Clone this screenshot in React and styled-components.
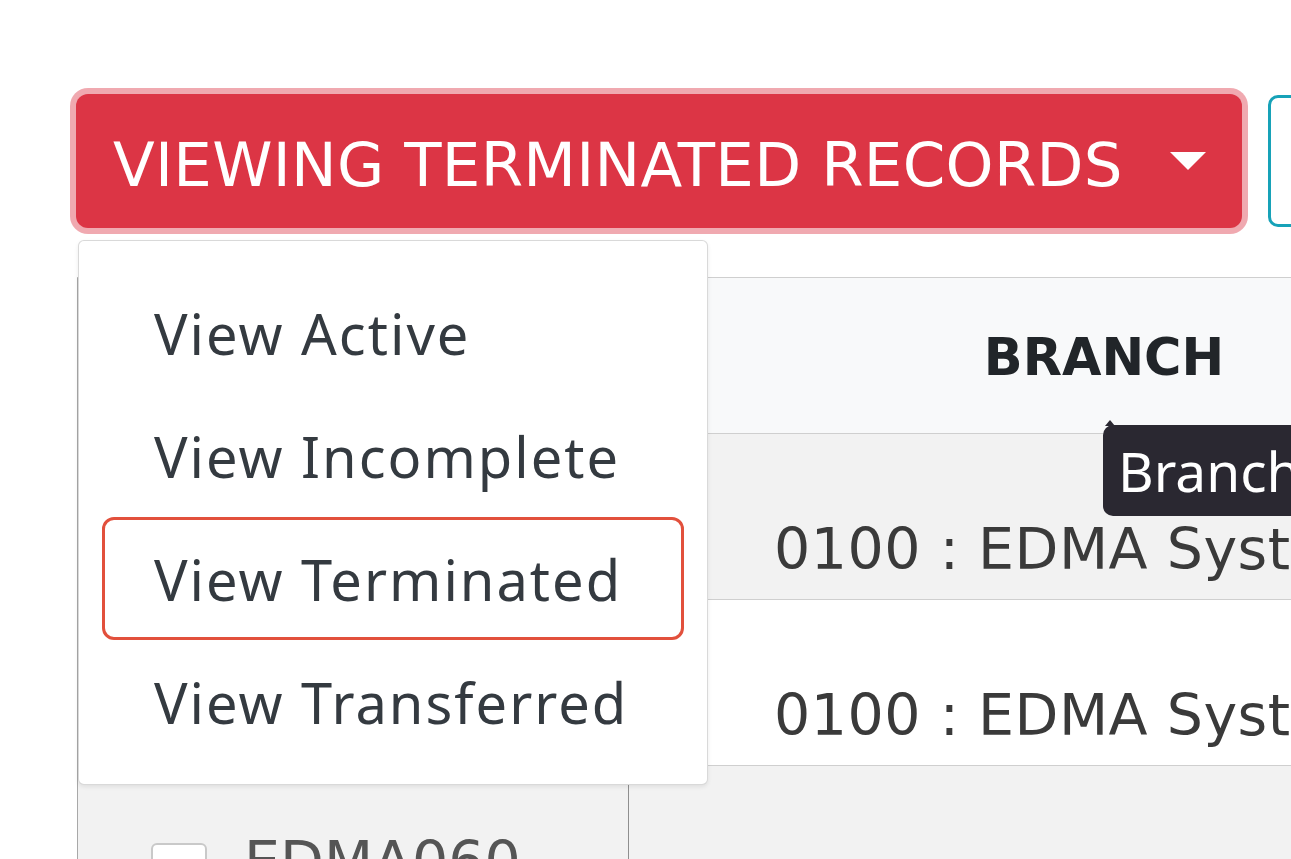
import React from "react";
import styled, { createGlobalStyle } from "styled-components";

const GlobalStyle = createGlobalStyle`
  html, body {
    margin: 0;
    padding: 0;
    background: #fff;
    overflow: hidden;
  }
`;

const menuItems = ["View Active", "View Incomplete", "View Terminated", "View Transferred"];

const App = () => {
  return (
    <Page>
      <GlobalStyle />
      <Toolbar>
        <DropdownWrap>
          <ToggleButton>
            VIEWING TERMINATED RECORDS
            <Caret />
          </ToggleButton>
          <Menu>
            {menuItems.map(item => (
              <MenuItem key={item} $marked={item === "View Terminated"}>
                {item}
              </MenuItem>
            ))}
          </Menu>
        </DropdownWrap>
        <OutlineButton />
      </Toolbar>

      <Table>
        <HeadRow>
          <Cell />
          <HeadCell>BRANCH</HeadCell>
        </HeadRow>
        <Row $striped>
          <Cell />
          <BranchCell>0100 : EDMA Systems</BranchCell>
        </Row>
        <Row>
          <Cell />
          <BranchCell>0100 : EDMA Systems</BranchCell>
        </Row>
        <Row $striped $tall>
          <IdCell>
            <Checkbox />
            EDMA060
          </IdCell>
          <Cell />
        </Row>
        <Tooltip>Branch</Tooltip>
      </Table>
    </Page>
  );
};

export default App;

const Page = styled.div`
  padding: 94px 0 0 76px;
  width: max-content;
  font-family: "DejaVu Sans", sans-serif;
`;

const Toolbar = styled.div`
  display: flex;
  align-items: center;
  gap: 26px;
`;

const DropdownWrap = styled.div`
  position: relative;
`;

const ToggleButton = styled.button`
  display: flex;
  align-items: center;
  width: 1166px;
  height: 134px;
  padding: 6px 36px 0 37px;
  border: none;
  border-radius: 12px;
  background: #dc3545;
  box-shadow: 0 0 0 6px rgba(225, 83, 97, 0.5);
  color: #fff;
  font-family: "DejaVu Sans", sans-serif;
  font-size: 61px;
  letter-spacing: 0.3px;
  white-space: nowrap;
`;

const Caret = styled.span`
  margin: -6px 0 0 auto;
  width: 0;
  height: 0;
  border-top: 18px solid #fff;
  border-left: 18px solid transparent;
  border-right: 18px solid transparent;
`;

const OutlineButton = styled.button`
  width: 200px;
  height: 132px;
  border: 3px solid #17a2b8;
  border-radius: 10px;
  background: #fff;
`;

const Menu = styled.div`
  position: absolute;
  z-index: 5;
  top: calc(100% + 12px);
  left: 2px;
  width: 630px;
  box-sizing: border-box;
  padding: 30px 0 21px;
  background: #fff;
  border: 1px solid rgba(0, 0, 0, 0.15);
  border-radius: 6px;
  box-shadow: 0 2px 4px rgba(0, 0, 0, 0.08);
`;

const MenuItem = styled.div`
  display: flex;
  align-items: center;
  height: 123px;
  box-sizing: border-box;
  margin: 0 23px;
  padding-left: 49px;
  border: 3px solid ${p => (p.$marked ? "#e2503c" : "transparent")};
  border-radius: 12px;
  color: #343a40;
  font-family: "Noto Sans", sans-serif;
  font-size: 56px;
  letter-spacing: 2px;
  white-space: nowrap;
`;

const Table = styled.div`
  position: relative;
  margin: 49px 0 0 1px;
  border-left: 1px solid #a8a8a8;
  border-top: 1px solid #cfcfcf;
`;

const HeadRow = styled.div`
  display: grid;
  grid-template-columns: 551px 950px;
  height: 155px;
  background: #f8f9fa;
  border-bottom: 1px solid #cfcfcf;
`;

const Row = styled.div`
  display: grid;
  grid-template-columns: 551px 950px;
  height: ${p => (p.$tall ? "200px" : "165px")};
  background: ${p => (p.$striped ? "#f2f2f2" : "#fff")};
  border-bottom: 1px solid #cfcfcf;
`;

const Cell = styled.div`
  border-right: 1px solid #8f8f8f;
`;

const HeadCell = styled.div`
  display: flex;
  align-items: center;
  justify-content: center;
  padding-top: 4px;
  color: #212529;
  font-weight: bold;
  font-size: 51px;
`;

const BranchCell = styled.div`
  padding: 87px 0 0 145px;
  color: #3a3a3a;
  font-size: 57px;
  line-height: 57px;
  letter-spacing: 0.5px;
  white-space: nowrap;
`;

const IdCell = styled.div`
  display: flex;
  align-items: flex-start;
  padding: 68px 0 0 73px;
  border-right: 1px solid #8f8f8f;
  color: #555;
  font-size: 57px;
  line-height: 57px;
`;

const Checkbox = styled.span`
  width: 56px;
  height: 56px;
  margin: 9px 37px 0 0;
  box-sizing: border-box;
  border: 2px solid #c9c9c9;
  border-radius: 6px;
  background: #fff;
`;

const Tooltip = styled.div`
  position: absolute;
  top: 147px;
  left: 1025px;
  height: 91px;
  box-sizing: border-box;
  padding: 0 30px 0 15px;
  display: flex;
  align-items: center;
  background: #2a2831;
  border-radius: 10px;
  color: #fff;
  font-family: "Noto Sans", sans-serif;
  font-size: 55px;

  &::before {
    content: "";
    position: absolute;
    top: -5px;
    left: 2px;
    border-bottom: 6px solid #2a2831;
    border-left: 5px solid transparent;
    border-right: 5px solid transparent;
  }
`;
